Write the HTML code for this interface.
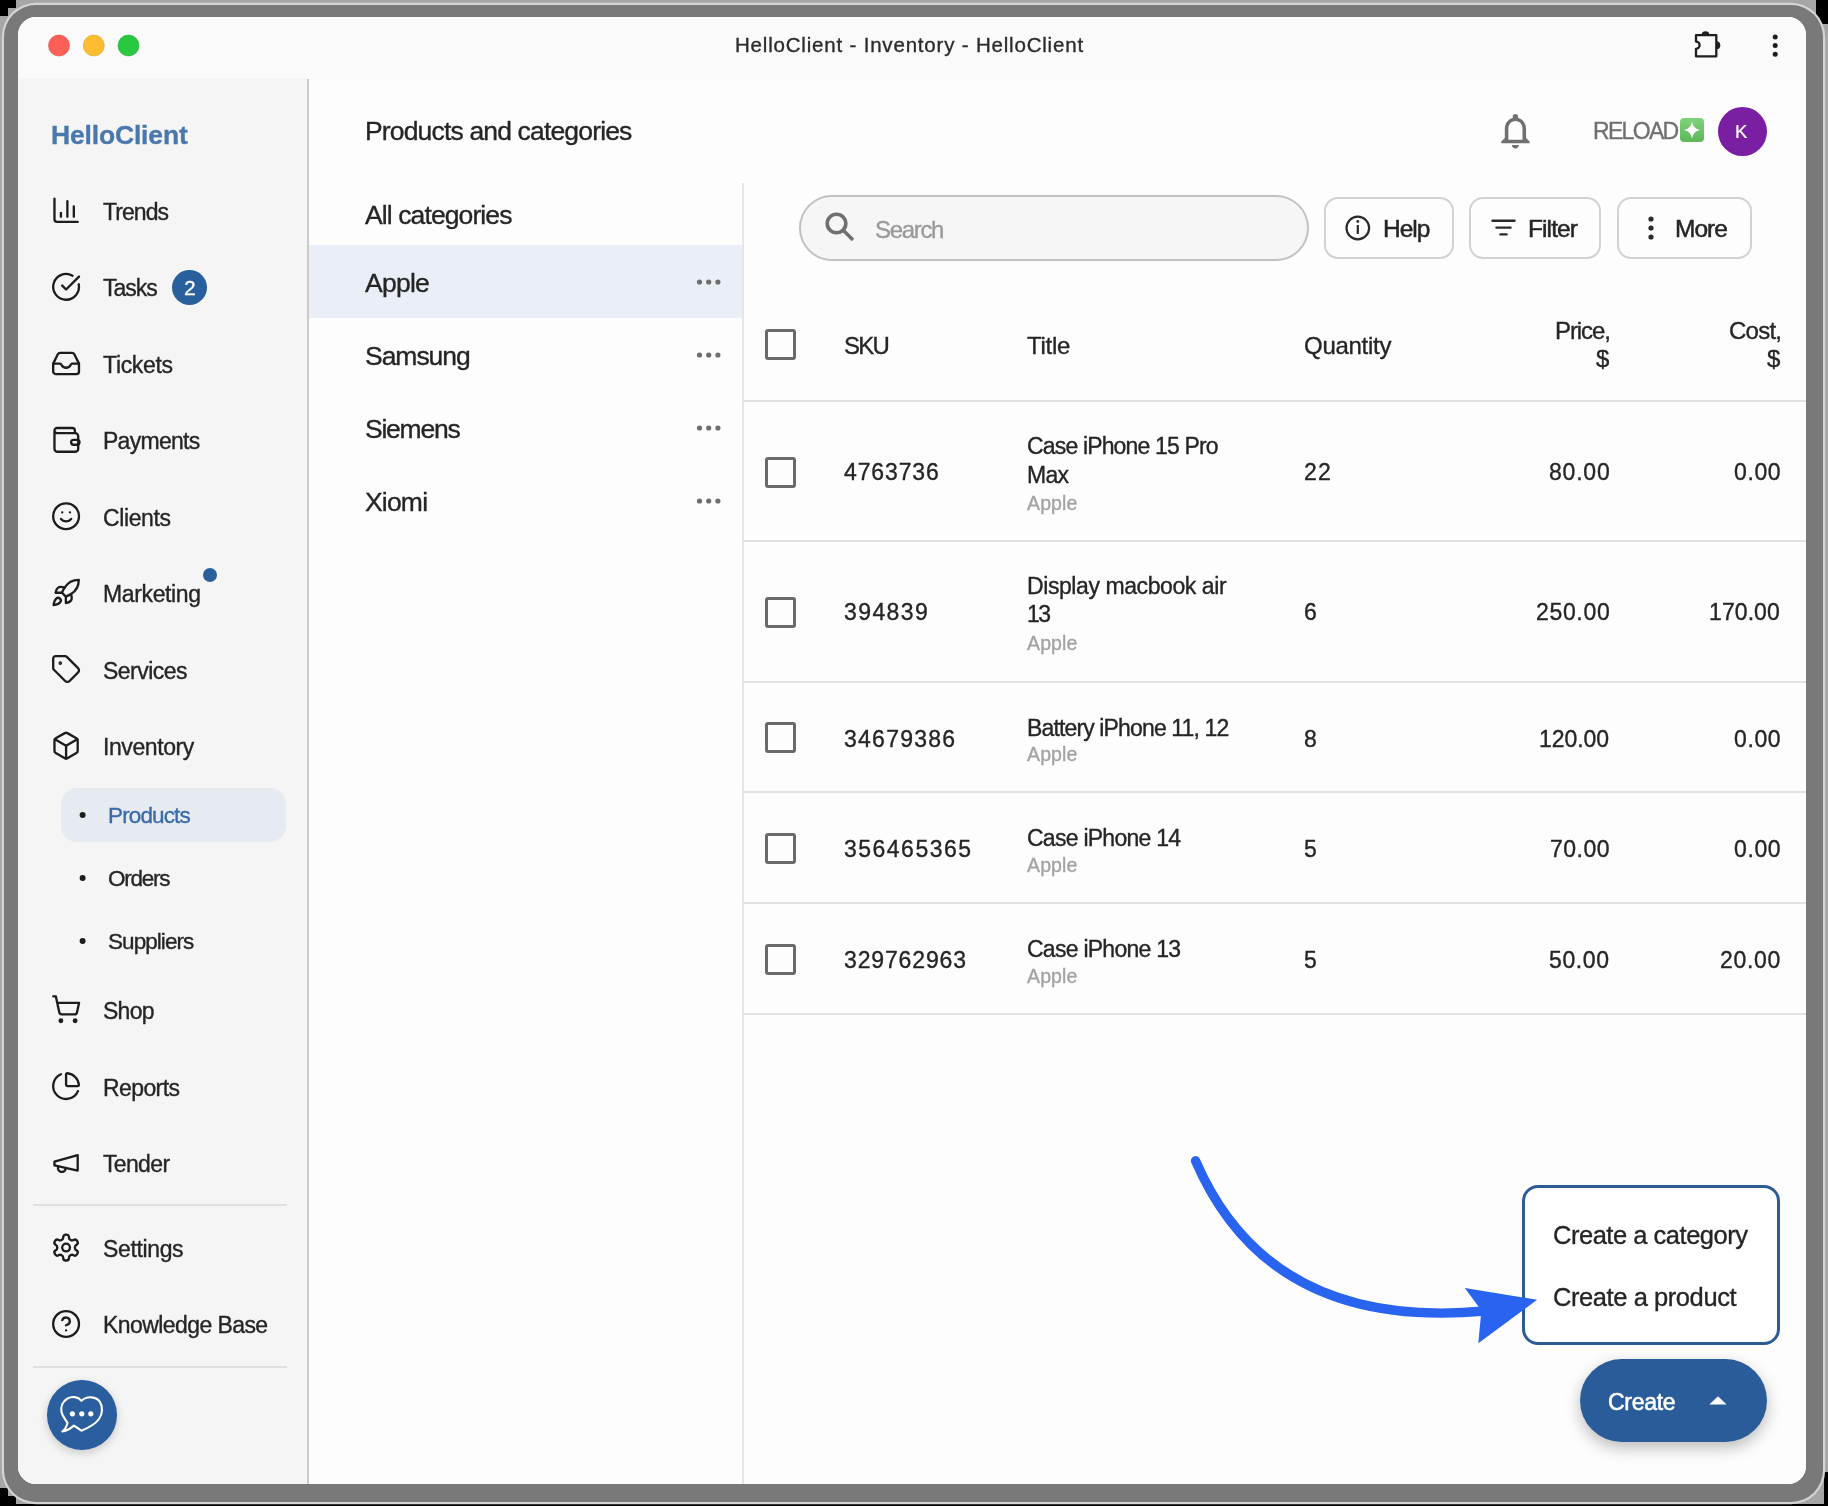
<!DOCTYPE html>
<html><head><meta charset="utf-8">
<style>
html,body{margin:0;padding:0;}
body{width:1828px;height:1506px;position:relative;overflow:hidden;background:#a6a6a6;font-family:"Liberation Sans",sans-serif;}
.t{position:absolute;white-space:nowrap;will-change:transform;-webkit-text-stroke-width:0.35px;}
</style></head><body>
<div style="position:absolute;left:0;top:1504px;width:1828px;height:2px;background:#000"></div>
<div style="position:absolute;left:0;top:0;width:16px;height:8px;background:#000"></div>
<div style="position:absolute;left:0;top:0;width:8px;height:15.5px;background:#000"></div>
<div style="position:absolute;left:1816px;top:0;width:12px;height:23.5px;background:#000"></div>
<div style="position:absolute;left:0;top:1488px;width:8px;height:18px;background:#000"></div>
<div style="position:absolute;left:0;top:1496px;width:16px;height:10px;background:#000"></div>
<div style="position:absolute;left:1824px;top:1472px;width:4px;height:34px;background:#000"></div>
<div style="position:absolute;left:4px;top:4.5px;width:1818.5px;height:1497.5px;border-radius:32px;background:#797979;box-shadow:0 0 0 2.2px #d4d4d4;"></div>
<div id="win" style="position:absolute;left:18px;top:17px;width:1788px;height:1467px;border-radius:18px;overflow:hidden;background:#fdfdfd;">
  <div style="position:absolute;left:0;top:0;width:1788px;height:63px;background:#fafafa;"></div>
  <div style="position:absolute;left:0;top:63px;width:1788px;height:1404px;background:#fdfdfd;"></div>
  <div style="position:absolute;left:0;top:61px;width:289px;height:1406px;background:#f5f5f5;"></div>
  <div style="position:absolute;left:289px;top:62px;width:2px;height:1405px;background:#cbcbcb;"></div>
</div>
<!-- highlights -->
<div style="position:absolute;left:61px;top:788px;width:225px;height:54px;border-radius:16px;background:#e6eaf1;"></div>
<div style="position:absolute;left:309px;top:245px;width:433px;height:73px;background:#eaeef6;"></div>
<!-- dividers -->
<div style="position:absolute;left:33px;top:1204px;width:254px;height:2px;background:#e0e0e0;"></div>
<div style="position:absolute;left:33px;top:1366px;width:254px;height:2px;background:#e0e0e0;"></div>
<div style="position:absolute;left:742px;top:183px;width:2px;height:1301px;background:#e6e6e6;"></div>
<div style="position:absolute;left:743px;top:400px;width:1063px;height:2px;background:#e2e2e2;"></div>
<div style="position:absolute;left:743px;top:540px;width:1063px;height:2px;background:#e2e2e2;"></div>
<div style="position:absolute;left:743px;top:681px;width:1063px;height:2px;background:#e2e2e2;"></div>
<div style="position:absolute;left:743px;top:791px;width:1063px;height:2px;background:#e2e2e2;"></div>
<div style="position:absolute;left:743px;top:902px;width:1063px;height:2px;background:#e2e2e2;"></div>
<div style="position:absolute;left:743px;top:1013px;width:1063px;height:2px;background:#e2e2e2;"></div>
<!-- search + buttons -->
<div style="position:absolute;left:799px;top:195px;width:506px;height:62px;border-radius:33px;border:2px solid #c2c2c2;background:#f6f6f6;"></div>
<div style="position:absolute;left:1324px;top:197px;width:126px;height:58px;border-radius:14px;border:2px solid #d2d2d2;background:#fdfdfd;"></div>
<div style="position:absolute;left:1469px;top:197px;width:128px;height:58px;border-radius:14px;border:2px solid #d2d2d2;background:#fdfdfd;"></div>
<div style="position:absolute;left:1617px;top:197px;width:131px;height:58px;border-radius:14px;border:2px solid #d2d2d2;background:#fdfdfd;"></div>
<!-- checkboxes -->
<div style="position:absolute;left:765px;top:329px;width:25px;height:25px;border:3px solid #6a6a6a;border-radius:3px;"></div>
<div style="position:absolute;left:765px;top:457px;width:25px;height:25px;border:3px solid #6a6a6a;border-radius:3px;"></div>
<div style="position:absolute;left:765px;top:597px;width:25px;height:25px;border:3px solid #6a6a6a;border-radius:3px;"></div>
<div style="position:absolute;left:765px;top:722px;width:25px;height:25px;border:3px solid #6a6a6a;border-radius:3px;"></div>
<div style="position:absolute;left:765px;top:833px;width:25px;height:25px;border:3px solid #6a6a6a;border-radius:3px;"></div>
<div style="position:absolute;left:765px;top:944px;width:25px;height:25px;border:3px solid #6a6a6a;border-radius:3px;"></div>
<!-- badge, dot, avatar -->
<div style="position:absolute;left:172px;top:270px;width:35px;height:35px;border-radius:50%;background:#2a5f9e;"></div>
<div style="position:absolute;left:203.3px;top:568px;width:14px;height:14px;border-radius:50%;background:#2a5f9e;"></div>
<div style="position:absolute;left:1718px;top:106.5px;width:49px;height:49px;border-radius:50%;background:#7b1fa2;"></div>
<div style="position:absolute;left:1680px;top:118px;width:24px;height:24px;border-radius:4px;background:linear-gradient(#7fd27c,#5bb85a);"></div>
<!-- chat -->
<div style="position:absolute;left:47px;top:1380px;width:69.5px;height:69.5px;border-radius:50%;background:#2b5e9e;box-shadow:0 3px 10px rgba(0,0,0,0.18);"></div>
<!-- dropdown -->
<div style="position:absolute;left:1522px;top:1185px;width:252px;height:154px;border:3px solid #2d5c95;border-radius:16px;background:#ffffff;"></div>
<!-- create button -->
<div style="position:absolute;left:1580px;top:1359px;width:187px;height:83px;border-radius:42px;background:#2a5c99;box-shadow:0 6px 16px rgba(0,0,0,0.26);"></div>
<div class="t" style="left:734.90px;top:35.25px;font-size:20.5px;line-height:20.5px;letter-spacing:0.808px;color:#2b2b2b;">HelloClient - Inventory - HelloClient</div>
<div class="t" style="left:51.20px;top:122.17px;font-size:26.5px;line-height:26.5px;letter-spacing:-0.168px;color:#4a78ad;font-weight:700;">HelloClient</div>
<div class="t" style="left:103.30px;top:200.63px;font-size:23px;line-height:23px;letter-spacing:-0.950px;color:#252525;">Trends</div>
<div class="t" style="left:103.30px;top:277.03px;font-size:23px;line-height:23px;letter-spacing:-1.037px;color:#252525;">Tasks</div>
<div class="t" style="left:103.30px;top:353.53px;font-size:23px;line-height:23px;letter-spacing:-0.317px;color:#252525;">Tickets</div>
<div class="t" style="left:103.30px;top:429.93px;font-size:23px;line-height:23px;letter-spacing:-0.721px;color:#252525;">Payments</div>
<div class="t" style="left:103.30px;top:506.53px;font-size:23px;line-height:23px;letter-spacing:-0.392px;color:#252525;">Clients</div>
<div class="t" style="left:103.30px;top:582.93px;font-size:23px;line-height:23px;letter-spacing:-0.363px;color:#252525;">Marketing</div>
<div class="t" style="left:103.30px;top:659.53px;font-size:23px;line-height:23px;letter-spacing:-0.521px;color:#252525;">Services</div>
<div class="t" style="left:103.30px;top:736.13px;font-size:23px;line-height:23px;letter-spacing:-0.416px;color:#252525;">Inventory</div>
<div class="t" style="left:103.30px;top:1000.33px;font-size:23px;line-height:23px;letter-spacing:-0.717px;color:#252525;">Shop</div>
<div class="t" style="left:103.30px;top:1076.73px;font-size:23px;line-height:23px;letter-spacing:-0.600px;color:#252525;">Reports</div>
<div class="t" style="left:103.30px;top:1152.73px;font-size:23px;line-height:23px;letter-spacing:-0.655px;color:#252525;">Tender</div>
<div class="t" style="left:103.30px;top:1237.73px;font-size:23px;line-height:23px;letter-spacing:-0.361px;color:#252525;">Settings</div>
<div class="t" style="left:103.30px;top:1313.93px;font-size:23px;line-height:23px;letter-spacing:-0.579px;color:#252525;">Knowledge Base</div>
<div class="t" style="left:108.00px;top:805.15px;font-size:22.5px;line-height:22.5px;letter-spacing:-0.879px;color:#3a6aa8;">Products</div>
<div class="t" style="left:108.00px;top:867.85px;font-size:22.5px;line-height:22.5px;letter-spacing:-1.230px;color:#252525;">Orders</div>
<div class="t" style="left:108.00px;top:930.55px;font-size:22.5px;line-height:22.5px;letter-spacing:-0.944px;color:#252525;">Suppliers</div>
<div class="t" style="left:365.10px;top:118.37px;font-size:26.5px;line-height:26.5px;letter-spacing:-0.839px;color:#252525;">Products and categories</div>
<div class="t" style="left:365.10px;top:202.07px;font-size:26.5px;line-height:26.5px;letter-spacing:-0.894px;color:#252525;">All categories</div>
<div class="t" style="left:364.80px;top:270.47px;font-size:26.5px;line-height:26.5px;letter-spacing:-0.738px;color:#252525;">Apple</div>
<div class="t" style="left:364.80px;top:343.47px;font-size:26.5px;line-height:26.5px;letter-spacing:-1.033px;color:#252525;">Samsung</div>
<div class="t" style="left:364.80px;top:416.47px;font-size:26.5px;line-height:26.5px;letter-spacing:-1.238px;color:#252525;">Siemens</div>
<div class="t" style="left:364.80px;top:489.47px;font-size:26.5px;line-height:26.5px;letter-spacing:-0.812px;color:#252525;">Xiomi</div>
<div class="t" style="left:875.20px;top:217.88px;font-size:24px;line-height:24px;letter-spacing:-1.320px;color:#9a9a9a;">Search</div>
<div class="t" style="left:1383.00px;top:216.66px;font-size:24.5px;line-height:24.5px;letter-spacing:-0.992px;color:#252525;-webkit-text-stroke:0.5px #252525;">Help</div>
<div class="t" style="left:1527.80px;top:216.66px;font-size:24.5px;line-height:24.5px;letter-spacing:-0.900px;color:#252525;-webkit-text-stroke:0.5px #252525;">Filter</div>
<div class="t" style="left:1674.90px;top:216.66px;font-size:24.5px;line-height:24.5px;letter-spacing:-0.958px;color:#252525;-webkit-text-stroke:0.5px #252525;">More</div>
<div class="t" style="left:1592.60px;top:119.83px;font-size:23px;line-height:23px;letter-spacing:-1.685px;color:#707070;">RELOAD</div>
<div class="t" style="left:1735.40px;top:122.94px;font-size:18.5px;line-height:18.5px;letter-spacing:0.000px;color:#ffffff;-webkit-text-stroke:0.2px #fff;">K</div>
<div class="t" style="left:844.20px;top:333.98px;font-size:24px;line-height:24px;letter-spacing:-1.787px;color:#252525;">SKU</div>
<div class="t" style="left:1027.40px;top:333.98px;font-size:24px;line-height:24px;letter-spacing:-0.275px;color:#252525;">Title</div>
<div class="t" style="left:1304.10px;top:333.98px;font-size:24px;line-height:24px;letter-spacing:-0.282px;color:#252525;">Quantity</div>
<div class="t" style="left:1555.40px;top:318.68px;font-size:24px;line-height:24px;letter-spacing:-1.075px;color:#252525;">Price,</div>
<div class="t" style="left:1595.92px;top:346.58px;font-size:24px;line-height:24px;letter-spacing:0.000px;color:#252525;">$</div>
<div class="t" style="left:1728.50px;top:318.68px;font-size:24px;line-height:24px;letter-spacing:-0.750px;color:#252525;">Cost,</div>
<div class="t" style="left:1766.83px;top:346.58px;font-size:24px;line-height:24px;letter-spacing:0.000px;color:#252525;">$</div>
<div class="t" style="left:844.40px;top:461.23px;font-size:23px;line-height:23px;letter-spacing:0.883px;color:#252525;">4763736</div>
<div class="t" style="left:1027.40px;top:435.03px;font-size:23px;line-height:23px;letter-spacing:-0.840px;color:#252525;">Case iPhone 15 Pro</div>
<div class="t" style="left:1027.40px;top:463.53px;font-size:23px;line-height:23px;letter-spacing:-0.700px;color:#252525;">Max</div>
<div class="t" style="left:1027.40px;top:493.69px;font-size:19.5px;line-height:19.5px;letter-spacing:0.131px;color:#a3a3a3;">Apple</div>
<div class="t" style="left:1303.90px;top:461.23px;font-size:23px;line-height:23px;letter-spacing:1.175px;color:#252525;">22</div>
<div class="t" style="left:1548.60px;top:461.23px;font-size:23px;line-height:23px;letter-spacing:0.800px;color:#252525;">80.00</div>
<div class="t" style="left:1733.60px;top:461.23px;font-size:23px;line-height:23px;letter-spacing:0.617px;color:#252525;">0.00</div>
<div class="t" style="left:844.40px;top:601.23px;font-size:23px;line-height:23px;letter-spacing:1.410px;color:#252525;">394839</div>
<div class="t" style="left:1027.40px;top:575.13px;font-size:23px;line-height:23px;letter-spacing:-0.418px;color:#252525;">Display macbook air</div>
<div class="t" style="left:1027.40px;top:603.03px;font-size:23px;line-height:23px;letter-spacing:-1.425px;color:#252525;">13</div>
<div class="t" style="left:1027.40px;top:633.99px;font-size:19.5px;line-height:19.5px;letter-spacing:0.131px;color:#a3a3a3;">Apple</div>
<div class="t" style="left:1303.90px;top:601.23px;font-size:23px;line-height:23px;letter-spacing:0.000px;color:#252525;">6</div>
<div class="t" style="left:1535.60px;top:601.23px;font-size:23px;line-height:23px;letter-spacing:0.665px;color:#252525;">250.00</div>
<div class="t" style="left:1709.40px;top:601.23px;font-size:23px;line-height:23px;letter-spacing:0.085px;color:#252525;">170.00</div>
<div class="t" style="left:844.40px;top:727.83px;font-size:23px;line-height:23px;letter-spacing:1.261px;color:#252525;">34679386</div>
<div class="t" style="left:1027.40px;top:716.53px;font-size:23px;line-height:23px;letter-spacing:-0.860px;color:#252525;">Battery iPhone 11, 12</div>
<div class="t" style="left:1027.40px;top:745.49px;font-size:19.5px;line-height:19.5px;letter-spacing:0.131px;color:#a3a3a3;">Apple</div>
<div class="t" style="left:1303.90px;top:727.83px;font-size:23px;line-height:23px;letter-spacing:0.000px;color:#252525;">8</div>
<div class="t" style="left:1539.30px;top:727.83px;font-size:23px;line-height:23px;letter-spacing:-0.075px;color:#252525;">120.00</div>
<div class="t" style="left:1733.60px;top:727.83px;font-size:23px;line-height:23px;letter-spacing:0.617px;color:#252525;">0.00</div>
<div class="t" style="left:844.40px;top:838.33px;font-size:23px;line-height:23px;letter-spacing:1.484px;color:#252525;">356465365</div>
<div class="t" style="left:1027.40px;top:827.03px;font-size:23px;line-height:23px;letter-spacing:-0.740px;color:#252525;">Case iPhone 14</div>
<div class="t" style="left:1027.40px;top:855.99px;font-size:19.5px;line-height:19.5px;letter-spacing:0.131px;color:#a3a3a3;">Apple</div>
<div class="t" style="left:1303.90px;top:838.33px;font-size:23px;line-height:23px;letter-spacing:0.000px;color:#252525;">5</div>
<div class="t" style="left:1549.80px;top:838.33px;font-size:23px;line-height:23px;letter-spacing:0.500px;color:#252525;">70.00</div>
<div class="t" style="left:1733.60px;top:838.33px;font-size:23px;line-height:23px;letter-spacing:0.617px;color:#252525;">0.00</div>
<div class="t" style="left:844.40px;top:949.23px;font-size:23px;line-height:23px;letter-spacing:0.859px;color:#252525;">329762963</div>
<div class="t" style="left:1027.40px;top:937.93px;font-size:23px;line-height:23px;letter-spacing:-0.740px;color:#252525;">Case iPhone 13</div>
<div class="t" style="left:1027.40px;top:966.79px;font-size:19.5px;line-height:19.5px;letter-spacing:0.131px;color:#a3a3a3;">Apple</div>
<div class="t" style="left:1303.90px;top:949.23px;font-size:23px;line-height:23px;letter-spacing:0.000px;color:#252525;">5</div>
<div class="t" style="left:1549.40px;top:949.23px;font-size:23px;line-height:23px;letter-spacing:0.600px;color:#252525;">50.00</div>
<div class="t" style="left:1719.90px;top:949.23px;font-size:23px;line-height:23px;letter-spacing:0.700px;color:#252525;">20.00</div>
<div class="t" style="left:1553.30px;top:1222.51px;font-size:25.5px;line-height:25.5px;letter-spacing:-0.478px;color:#252525;">Create a category</div>
<div class="t" style="left:1553.30px;top:1284.71px;font-size:25.5px;line-height:25.5px;letter-spacing:-0.427px;color:#252525;">Create a product</div>
<div class="t" style="left:1608.00px;top:1391.43px;font-size:23px;line-height:23px;letter-spacing:-0.280px;color:#ffffff;-webkit-text-stroke:0.55px #fff;">Create</div>
<div class="t" style="left:183.80px;top:276.82px;font-size:21px;line-height:21px;letter-spacing:0.000px;color:#ffffff;-webkit-text-stroke:0.3px #fff;">2</div>
<svg style="position:absolute;left:0;top:0;" width="1828" height="1506" viewBox="0 0 1828 1506">
<!-- traffic lights -->
<circle cx="59" cy="45.5" r="10.5" fill="#fe5f57" stroke="#e0443e" stroke-width="0.6"/>
<circle cx="93.8" cy="45.5" r="10.5" fill="#febc2e" stroke="#dea123" stroke-width="0.6"/>
<circle cx="128.5" cy="45.5" r="10.5" fill="#28c840" stroke="#1aab29" stroke-width="0.6"/>
<!-- sidebar icons: lucide-like, scale 1.29 -->
<g fill="none" stroke="#1c1c1c" stroke-width="1.8" stroke-linecap="round" stroke-linejoin="round">
 <g transform="translate(50.6,194.8) scale(1.29)"><path d="M3 3v16a2 2 0 0 0 2 2h16"/><path d="M18 17V9"/><path d="M13 17V5"/><path d="M8 17v-3"/></g>
 <g transform="translate(50.6,271.4) scale(1.29)"><path d="M21.801 10A10 10 0 1 1 17 3.335"/><path d="m9 11 3 3L22 4"/></g>
 <g transform="translate(50.6,348) scale(1.29)"><path d="M2 12.1 L5.6 4.9 A2 2 0 0 1 7.4 3.8 H16.6 A2 2 0 0 1 18.4 4.9 L22 12.1 V18.2 A2 2 0 0 1 20 20.2 H4 A2 2 0 0 1 2 18.2 Z"/><path d="M2 12.1 H7.2 Q8 12.1 8.5 13.2 Q9.5 15.3 12 15.3 Q14.5 15.3 15.5 13.2 Q16 12.1 16.8 12.1 H22"/></g>
 <g transform="translate(50.6,424.4) scale(1.29)"><path d="M3 5 V18.8 A2.4 2.4 0 0 0 5.4 21.2 H19 A2.4 2.4 0 0 0 21.4 18.8 V9.2 A2.4 2.4 0 0 0 19 6.8 H5 A2 2 0 0 1 3 4.8 A2 2 0 0 1 5 2.8 H16.8 A2 2 0 0 1 18.8 4.8 V6.8"/><path d="M17.8 12 H20.5 A1.9 1.9 0 0 1 20.5 15.8 H17.8 A1.9 1.9 0 0 1 17.8 12 Z"/></g>
 <g transform="translate(50.6,500.8) scale(1.29)"><circle cx="12" cy="12" r="10"/><path d="M8 14s1.5 2 4 2 4-2 4-2"/><path d="M9 9h.01"/><path d="M15 9h.01"/></g>
 <g transform="translate(50.4,577.3) scale(1.29)"><path d="M4.5 16.5c-1.5 1.26-2 5-2 5s3.74-.5 5-2c.71-.84.7-2.130-.09-2.910a2.18 2.18 0 0 0-2.910-.090z"/><path d="m12 15-3-3a22 22 0 0 1 2-3.950A12.880 12.880 0 0 1 22 2c0 2.720-.780 7.500-6 11a22.350 22.350 0 0 1-4 2z"/><path d="M9 12H4s.55-3.030 2-4c1.620-1.080 5 0 5 0"/><path d="M12 15v5s3.030-.550 4-2c1.080-1.620 0-5 0-5"/></g>
 <g transform="translate(50.6,653.5) scale(1.29)"><path d="M12.586 2.586A2 2 0 0 0 11.172 2H4a2 2 0 0 0-2 2v7.172a2 2 0 0 0 .586 1.414l8.704 8.704a2.426 2.426 0 0 0 3.420 0l6.580-6.580a2.426 2.426 0 0 0 0-3.420z"/><circle cx="7.5" cy="7.5" r=".5" fill="#1c1c1c"/></g>
 <g transform="translate(50.6,730.2) scale(1.29)"><path d="M21 8a2 2 0 0 0-1-1.730l-7-4a2 2 0 0 0-2 0l-7 4A2 2 0 0 0 3 8v8a2 2 0 0 0 1 1.730l7 4a2 2 0 0 0 2 0l7-4A2 2 0 0 0 21 16Z"/><path d="m3.3 7 8.7 5 8.7-5"/><path d="M12 22V12"/></g>
 <g transform="translate(50.6,993.7) scale(1.29)"><circle cx="8" cy="21" r="1"/><circle cx="19" cy="21" r="1"/><path d="M2.050 2.050h2l2.660 12.420a2 2 0 0 0 2 1.580h9.780a2 2 0 0 0 1.950-1.570l1.650-7.430H5.120"/></g>
 <g transform="translate(50.6,1070.6) scale(1.29)"><path d="M21 12c.552 0 1.005-.449.950-.998a10 10 0 0 0-8.953-8.951c-.550-.055-.998.398-.998.950v8a1 1 0 0 0 1 1z"/><path d="M21.210 15.890A10 10 0 1 1 8 2.830"/></g>
 <g transform="translate(50.6,1147.4) scale(1.29)"><path d="m3 11 18-5v12L3 14v-3z"/><path d="M11.600 16.800a3 3 0 1 1-5.800-1.600"/></g>
 <g transform="translate(50.6,1232.1) scale(1.29)"><path d="M12.220 2h-.440a2 2 0 0 0-2 2v.180a2 2 0 0 1-1 1.730l-.430.250a2 2 0 0 1-2 0l-.150-.080a2 2 0 0 0-2.730.730l-.220.380a2 2 0 0 0 .730 2.730l.150.100a2 2 0 0 1 1 1.720v.510a2 2 0 0 1-1 1.740l-.150.090a2 2 0 0 0-.730 2.730l.220.380a2 2 0 0 0 2.730.730l.150-.080a2 2 0 0 1 2 0l.430.250a2 2 0 0 1 1 1.730V20a2 2 0 0 0 2 2h.440a2 2 0 0 0 2-2v-.180a2 2 0 0 1 1-1.730l.430-.250a2 2 0 0 1 2 0l.150.080a2 2 0 0 0 2.730-.730l.220-.390a2 2 0 0 0-.730-2.730l-.150-.080a2 2 0 0 1-1-1.740v-.500a2 2 0 0 1 1-1.740l.150-.090a2 2 0 0 0 .730-2.730l-.220-.380a2 2 0 0 0-2.730-.730l-.150.080a2 2 0 0 1-2 0l-.430-.250a2 2 0 0 1-1-1.730V4a2 2 0 0 0-2-2z"/><circle cx="12" cy="12" r="3"/></g>
 <g transform="translate(50.6,1308.5) scale(1.29)"><circle cx="12" cy="12" r="10"/><path d="M9.090 9a3 3 0 0 1 5.830 1c0 2-3 3-3 3"/><path d="M12 17h.01"/></g>
</g>
<!-- sub nav bullets -->
<circle cx="82.6" cy="815" r="3" fill="#1e1e1e"/>
<circle cx="82.6" cy="878" r="3" fill="#1e1e1e"/>
<circle cx="82.6" cy="941" r="3" fill="#1e1e1e"/>
<!-- chat bubble -->
<g fill="none" stroke="#ffffff" stroke-width="2.1" stroke-linejoin="round">
 <path d="M81.5 1400.8 C78 1396.5 72 1396 67.5 1398.5 C62.5 1401.5 60.5 1407 61.5 1412 C62.5 1417 66 1420 67.5 1423 C66.5 1427 64.5 1430 62.3 1431.5 C66.5 1431 70.5 1428.5 73.9 1425.6 L81.5 1430.7 C88 1428 95 1424.5 99 1419 C102.5 1414 103 1407 100 1402 C96.5 1396.5 87 1395.5 81.5 1400.8 Z"/>
</g>
<circle cx="72.4" cy="1413.8" r="2.6" fill="#fff"/><circle cx="81.8" cy="1413.8" r="2.6" fill="#fff"/><circle cx="90.8" cy="1413.8" r="2.6" fill="#fff"/>
<!-- title bar icons -->
<g fill="none" stroke="#1e1e1e" stroke-width="2.3" stroke-linejoin="round">
 <path d="M1696 35.2 H1716.3 V56.3 H1696 V48.8 A3.6 3.6 0 0 0 1696 41.6 Z"/>
</g>
<path d="M1701.5 35.2 A4 4 0 0 1 1709.5 35.2 Z" fill="#1e1e1e"/>
<path d="M1716.3 41.3 A4 4 0 0 1 1716.3 49.3 Z" fill="#1e1e1e"/>
<circle cx="1775.2" cy="37" r="2.5" fill="#1e1e1e"/><circle cx="1775.2" cy="45.6" r="2.5" fill="#1e1e1e"/><circle cx="1775.2" cy="54.3" r="2.5" fill="#1e1e1e"/>
<!-- bell -->
<g transform="translate(1494.2,109.6) scale(1.77)"><path fill="#707070" d="M12 22c1.1 0 2-.9 2-2h-4c0 1.1.89 2 2 2zm6-6v-5c0-3.070-1.640-5.640-4.500-6.320V4c0-.830-.670-1.500-1.500-1.500s-1.500.670-1.500 1.500v.680C7.630 5.360 6 7.920 6 11v5l-2 2v1h16v-1l-2-2zm-2 1H8v-6c0-2.480 1.510-4.500 4-4.500s4 2.020 4 4.500v6z"/></g>
<!-- sparkle -->
<path d="M1692 121.5 Q1693.2 128.8 1700 130 Q1693.2 131.2 1692 138.5 Q1690.8 131.2 1684 130 Q1690.8 128.8 1692 121.5 Z" fill="#ffffff"/>
<!-- search icon -->
<g fill="none" stroke="#707070" stroke-width="3.6" stroke-linecap="butt">
 <circle cx="836.5" cy="223.5" r="9.3"/>
 <path d="M843.5 230.5 L853 240"/>
</g>
<!-- help icon -->
<g fill="none" stroke="#2a2a2a" stroke-width="2.2">
 <circle cx="1357.8" cy="228" r="11.3"/>
</g>
<path d="M1357.8 225 V234" stroke="#2a2a2a" stroke-width="2.2"/>
<circle cx="1357.8" cy="221.5" r="1.4" fill="#2a2a2a"/>
<!-- filter icon -->
<g stroke="#2a2a2a" stroke-width="2.4" stroke-linecap="round">
 <path d="M1492.5 220.8 H1514.5"/><path d="M1496.5 227.6 H1510.5"/><path d="M1500.5 234.4 H1506.5"/>
</g>
<!-- more icon -->
<circle cx="1651" cy="219" r="2.6" fill="#2a2a2a"/><circle cx="1651" cy="228" r="2.6" fill="#2a2a2a"/><circle cx="1651" cy="237" r="2.6" fill="#2a2a2a"/>
<!-- dropdown dots in categories -->
<g fill="#6e6e6e">
 <circle cx="699.5" cy="282" r="2.6"/><circle cx="708.7" cy="282" r="2.6"/><circle cx="717.9" cy="282" r="2.6"/>
 <circle cx="699.5" cy="355" r="2.6"/><circle cx="708.7" cy="355" r="2.6"/><circle cx="717.9" cy="355" r="2.6"/>
 <circle cx="699.5" cy="428" r="2.6"/><circle cx="708.7" cy="428" r="2.6"/><circle cx="717.9" cy="428" r="2.6"/>
 <circle cx="699.5" cy="501" r="2.6"/><circle cx="708.7" cy="501" r="2.6"/><circle cx="717.9" cy="501" r="2.6"/>
</g>
<!-- create triangle -->
<path d="M1709.3 1404.5 L1718 1396.3 L1726.6 1404.5 Z" fill="#ffffff"/>
<!-- arrow -->
<path d="M1195.6 1160.8 Q1269 1331 1485 1311" fill="none" stroke="#2864f0" stroke-width="9.4" stroke-linecap="round"/>
<path d="M1464.8 1288 L1537.1 1299.7 L1478.3 1343.3 L1481.4 1310.5 Z" fill="#2864f0"/>
</svg>

</body></html>
